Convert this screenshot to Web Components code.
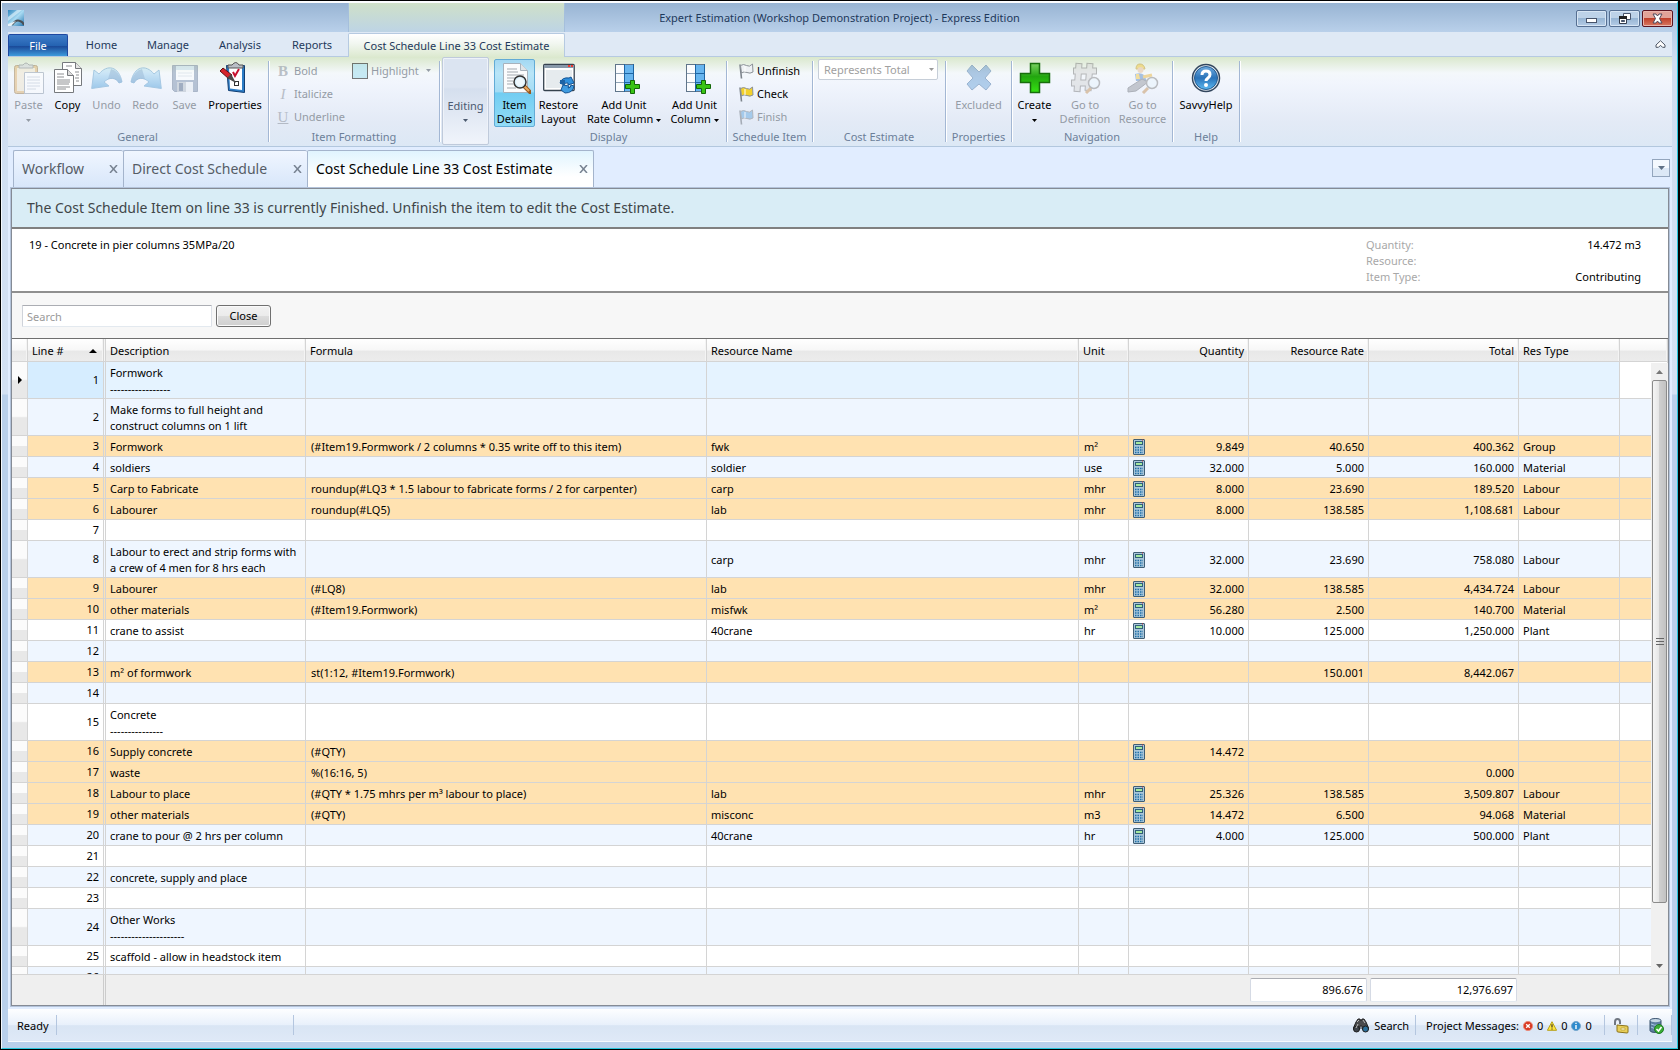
<!DOCTYPE html>
<html lang="en">
<head>
<meta charset="utf-8">
<title>Expert Estimation</title>
<style>
    html, body {
        margin: 0;
        height: 100%;
    }

    body {
        font-family: "Noto Sans", "Open Sans", sans-serif;
        font-size: 11px;
        line-height: 16px;
        color: #000;
        overflow: hidden;
    }
</style>
</head>
<body>

<app-window>
    <title-bar slot="title">Expert Estimation (Workshop Demonstration Project) - Express Edition</title-bar>

    <ribbon-tabs slot="ribbon"></ribbon-tabs>
    <ribbon-bar slot="ribbon">
        <ribbon-group label="General">
            <ribbon-button icon="paste" style="--w:39px" disabled arrow>Paste</ribbon-button>
            <ribbon-button icon="copy" style="--w:39px">Copy</ribbon-button>
            <ribbon-button icon="undo" style="--w:39px" disabled>Undo</ribbon-button>
            <ribbon-button icon="redo" style="--w:39px" disabled>Redo</ribbon-button>
            <ribbon-button icon="save" style="--w:39px" disabled>Save</ribbon-button>
            <ribbon-button icon="properties" style="--w:62px">Properties</ribbon-button>
        </ribbon-group>
        <ribbon-group label="Item Formatting">
            <ribbon-list style="--w:77px">
                <small-button icon="bold" disabled>Bold</small-button>
                <small-button icon="italic" disabled>Italicize</small-button>
                <small-button icon="underline" disabled>Underline</small-button>
            </ribbon-list>
            <ribbon-list style="--w:87px">
                <small-button icon="swatch" disabled arrow>Highlight</small-button>
            </ribbon-list>
        </ribbon-group>
        <ribbon-collapsed>Editing</ribbon-collapsed>
        <ribbon-group label="Display">
            <ribbon-button icon="details" style="--w:41px" active>Item<br>Details</ribbon-button>
            <ribbon-button icon="layout" style="--w:47px">Restore<br>Layout</ribbon-button>
            <ribbon-button icon="column" style="--w:84px" inline-arrow>Add Unit<br>Rate Column</ribbon-button>
            <ribbon-button icon="column" style="--w:57px" inline-arrow>Add Unit<br>Column</ribbon-button>
        </ribbon-group>
        <ribbon-group label="Schedule Item">
            <ribbon-list style="--w:79px; --indent:8px">
                <small-button icon="flag-white">Unfinish</small-button>
                <small-button icon="flag-yellow">Check</small-button>
                <small-button icon="flag-blue" disabled>Finish</small-button>
            </ribbon-list>
        </ribbon-group>
        <ribbon-group label="Cost Estimate">
            <ribbon-combo>Represents Total</ribbon-combo>
        </ribbon-group>
        <ribbon-group label="Properties">
            <ribbon-button icon="cross" style="--w:59px" disabled>Excluded</ribbon-button>
        </ribbon-group>
        <ribbon-group label="Navigation">
            <ribbon-button icon="plus" style="--w:39px" arrow>Create</ribbon-button>
            <ribbon-button icon="hash" style="--w:62px" disabled>Go to<br>Definition</ribbon-button>
            <ribbon-button icon="resource" style="--w:53px" disabled>Go to<br>Resource</ribbon-button>
        </ribbon-group>
        <ribbon-group label="Help">
            <ribbon-button icon="help" style="--w:60px">SavvyHelp</ribbon-button>
        </ribbon-group>
    </ribbon-bar>

    <doc-tabs>
        <doc-tab style="--w:110px">Workflow</doc-tab>
        <doc-tab style="--w:184px">Direct Cost Schedule</doc-tab>
        <doc-tab style="--w:287px" active>Cost Schedule Line 33 Cost Estimate</doc-tab>
    </doc-tabs>

    <content-frame>
        <message-banner>The Cost Schedule Item on line 33 is currently Finished. Unfinish the item to edit the Cost Estimate.</message-banner>
        <item-summary>
            19 - Concrete in pier columns 35MPa/20
            <span slot="quantity">14.472 m3</span>
            <span slot="type">Contributing</span>
        </item-summary>
        <search-panel></search-panel>
        <estimate-grid></estimate-grid>
    </content-frame>

    <status-bar slot="status"></status-bar>
</app-window>

<script>
const ICONS = {
    app: `<svg viewBox="0 0 16 16"><defs><linearGradient id="g" x2="1" y2="1"><stop offset="0" stop-color="#2f86bd"/><stop offset=".5" stop-color="#a8daf2"/><stop offset="1" stop-color="#2a78b0"/></linearGradient></defs>
        <rect width="16" height="16" fill="url(#g)"/><path d="M0 11 14 0H9L0 7z" fill="#e6f6fd" opacity=".6"/><path d="M4 15q4-6 8-4 3 1 4 4" fill="none" stroke="#4b4f55" stroke-width="2"/><path d="M0 16v-2l8-3-5 5z" fill="#e8f2f8"/></svg>`,
    paste: `<svg viewBox="0 0 32 32"><rect x="1.500" y="3.500" width="23" height="28" rx="2" fill="#dba85a" stroke="#8d6a35"/><rect x="4" y="6" width="18" height="23" fill="#eee3c8"/>
        <path d="M6 6V3h4q3-4 6 0h4v3z" fill="#c9cdd2" stroke="#6f757c"/><path d="M11.500 10.500h19v21h-19z" fill="#fff" stroke="#7f8ea0"/><path d="M14 15h13M14 18h13M14 21h13M14 24h13M14 27h9" stroke="#b2bccb"/></svg>`,
    copy: `<svg viewBox="0 0 32 32"><g fill="#fff" stroke="#76797d"><path d="M10.500 .5h13l6 6v17h-19z"/><path d="M23.500 .5v6h6" fill="#e4e4e4"/><path d="M2.500 7.500h13l6 6v17h-19z"/><path d="M15.500 7.500v6h6" fill="#dedede"/></g>
        <path d="M23 10h4M24 13h3M23 16h4M24 19h3M14 4h6M5 12h7M5 15h7M5 18h13M5 20h13M5 22h12M5 25h13M5 27h9" stroke="#8d8f92"/></svg>`,
    undo: `<svg viewBox="0 0 32 32"><defs><linearGradient id="g" y2="1" x2="0"><stop offset="0" stop-color="#b9e3fa"/><stop offset="1" stop-color="#3b94d4"/></linearGradient></defs>
        <path d="M.7 26.500 3 8l5 4c8-10 20-8 23 8l-3 1c-3-6-10-6-15-1l5 4z" fill="url(#g)" stroke="#4b92c6"/><path d="M20 7q8 2 11 13l-3 1q-4-6-11-4z" fill="#2d6ba8" opacity=".5"/></svg>`,
    redo: `<svg viewBox="0 0 32 32"><defs><linearGradient id="g" y2="1" x2="0"><stop offset="0" stop-color="#b9e3fa"/><stop offset="1" stop-color="#3b94d4"/></linearGradient></defs>
        <g transform="matrix(-1 0 0 1 32 0)"><path d="M.7 26.500 3 8l5 4c8-10 20-8 23 8l-3 1c-3-6-10-6-15-1l5 4z" fill="url(#g)" stroke="#4b92c6"/><path d="M20 7q8 2 11 13l-3 1q-4-6-11-4z" fill="#2d6ba8" opacity=".5"/></g></svg>`,
    save: `<svg viewBox="0 0 32 32"><path d="M3.500 3.500h25v26h-23l-2-2z" fill="#6d84a3" stroke="#5a6e8c"/><rect x="7" y="4" width="18" height="14" fill="#fff"/><path d="M7 4h18v4H7z" fill="#bcd8ea"/><path d="M9 11h14M9 14h14" stroke="#c9d4dd"/>
        <rect x="8" y="20" width="16" height="10" fill="#aab4bf"/><rect x="10" y="21" width="4" height="8" fill="#41597b"/><path d="M17 20h7v10h-7z" fill="#e8ecf0"/></svg>`,
    properties: `<svg viewBox="0 0 32 32"><path d="M7.500 3.500h18v27l-16-2z" fill="#2d7dc6" stroke="#123f74"/><path d="M10 6h13v22l-12-1.500z" fill="#fff"/><path d="M9 6V3h4q4-5 7 0h4v3z" fill="#b9bec6" stroke="#555"/>
        <path d="M14 10l2 4 4-7" fill="none" stroke="#c8102e" stroke-width="2"/><rect x="15.500" y="19.500" width="4" height="4" fill="#fff" stroke="#333"/><path d="M1 9l3-3 9 7-3 4z" fill="#d6242b" stroke="#5c1014"/><path d="M8 16l4-4 5 9z" fill="#4a4a4a"/></svg>`,
    bold: `<b>B</b>`, italic: `<i>I</i>`, underline: `<u>U</u>`,
    swatch: `<svg viewBox="0 0 16 16"><rect x=".5" y=".5" width="15" height="15" fill="#a9e0f0" stroke="#222"/></svg>`,
    details: `<svg viewBox="0 0 32 32"><path d="M4.500 1.500h17l7 7v22h-24z" fill="#fbfcfd" stroke="#a7b2bc"/><path d="M21.500 1.500v7h7" fill="#dfe4e8" stroke="#a7b2bc"/><path d="M8 7h10M8 10h11M8 13h17M8 16h9M8 19h6M8 22h6M8 26h9" stroke="#a3a9af" stroke-width="1"/>
        <path d="M25 24l6 6" stroke="#9a5a1e" stroke-width="4" stroke-linecap="round"/><path d="M25 24l5 5" stroke="#e8a860" stroke-width="2"/><circle cx="21" cy="20" r="6" fill="#d7eefb" stroke="#333" stroke-width="1.500"/><circle cx="21" cy="20" r="4" fill="#fff" opacity=".6"/></svg>`,
    layout: `<svg viewBox="0 0 32 32"><rect x=".7" y="2.500" width="30.500" height="26" rx="1" fill="#fff" stroke="#36424f" stroke-width="1.300"/><rect x="1" y="3" width="30" height="3" fill="#8798a9"/><path d="M25 4h2M28 4h2" stroke="#ef3a2f" stroke-width="2"/><path d="M3 8h26v18H3z" fill="#e6ebee"/>
        <path d="M17 21q2-6 9-5l2-1 3 6-6 2v-2q-3-1-4 2z" fill="#2f8fdc" stroke="#135394"/><path d="M31 24q-1 7-9 7l-4-3 2-5 6 1-1 2q3 0 3-3z" fill="#3f9be0" stroke="#135394"/><path d="M17 18h5v4h-5z" fill="#1d62a4"/></svg>`,
    column: `<svg viewBox="0 0 32 32"><g transform="translate(3 0)"><rect x="4.500" y="2.500" width="18" height="27" fill="#fbfcfe" stroke="#60758a"/><path d="M5 11.500h17M5 20.500h17" stroke="#8fa2b5"/><rect x="14" y="3" width="8" height="26" fill="#67b5ef"/><path d="M13.500 2v28M14 11.500h9M14 20.500h9" stroke="#1e65a3"/><path d="M22.500 2v28" stroke="#1e65a3"/>
        <path d="M19.500 18.500h4v4h5v4h-5v5h-4v-5h-5v-4h5z" fill="#39c414" stroke="#136708"/></g></svg>`,
    cross: `<svg viewBox="0 0 32 32"><defs><linearGradient id="g" y2="1" x2="0"><stop offset="0" stop-color="#4f83bd"/><stop offset="1" stop-color="#67a5dc"/></linearGradient></defs><path d="M4 9l5-6 7 7 7-7 5 6-6 7 6 6-5 6-7-6-7 6-5-6 6-6z" fill="url(#g)" stroke="#31649a"/></svg>`,
    plus: `<svg viewBox="0 0 32 32"><defs><linearGradient id="g" y2="1" x2="0"><stop offset="0" stop-color="#78d060"/><stop offset=".45" stop-color="#22a60f"/><stop offset="1" stop-color="#35e312"/></linearGradient></defs><path d="M11.500 1.500h9v10h10v9h-10v10h-9v-10h-10v-9h10z" fill="url(#g)" stroke="#176e0c" stroke-width="1.500"/></svg>`,
    hash: `<svg viewBox="0 0 32 32"><g fill="none" stroke="#6a6a6a" stroke-width="7"><path d="M10 1 8 30M21 1l-2 28M4 9h24M2 21h23"/></g><g fill="none" stroke="#d2d2d2" stroke-width="5"><path d="M10 2 8 29M21 2l-2 26M5 9h22M3 21h21"/></g><path d="M22 26l-5 5" stroke="#c18a4a" stroke-width="3"/><circle cx="25" cy="21" r="5.500" fill="#e8f4fc" stroke="#777" stroke-width="1.500"/></svg>`,
    resource: `<svg viewBox="0 0 32 32"><path d="M9 7q0-5 4-5t5 5z" fill="#f3c321" stroke="#b98b0d"/><circle cx="13.500" cy="8" r="3" fill="#e8b88f"/><path d="M8 12q6-2 9 1l3 6H9z" fill="#4b7fc0"/><path d="M9 12h3l1 5h-4z" fill="#f0c030"/><path d="M1 26l14-9 6 3-12 9-8 1z" fill="#8c9098" stroke="#5c6068"/><path d="M16 15l9-2" stroke="#e8b02c" stroke-width="3"/><path d="M21 26l-5 5" stroke="#c18a4a" stroke-width="3"/><circle cx="25" cy="21" r="5.500" fill="#e8f4fc" stroke="#777" stroke-width="1.500"/></svg>`,
    help: `<svg viewBox="0 0 32 32"><defs><linearGradient id="g" y2="1" x2="0"><stop offset="0" stop-color="#6fabdf"/><stop offset=".5" stop-color="#2a73b9"/><stop offset="1" stop-color="#5cb9f2"/></linearGradient></defs><circle cx="16" cy="16" r="13.500" fill="#e7edf3" stroke="#33475e" stroke-width="1.500"/><circle cx="16" cy="16" r="11.500" fill="url(#g)" stroke="#255b8f"/>
        <path d="M12 13q0-4 4-4t4 3.500q0 2-2 3.500t-2 3" fill="none" stroke="#fff" stroke-width="3"/><circle cx="16" cy="23" r="2" fill="#fff"/></svg>`,
    calc: `<svg viewBox="0 0 12 16"><rect x=".5" y=".5" width="11" height="15" rx=".5" fill="#a9c6da" stroke="#3f5e75"/><rect x="2" y="2" width="8" height="4" fill="#2f6079"/><rect x="3" y="3" width="6" height="2" fill="#a6e8a0"/><path d="M9 1h1" stroke="#c33"/>
        <path d="M2 8.500h8M2 11h8M2 13.500h8" stroke="#1f6fa8" stroke-width="1.500" stroke-dasharray="1.500 1"/></svg>`,
    binoculars: `<svg viewBox="0 0 16 16"><path d="M3 4l2-3h2l1 2 1-2h2l2 3 3 7H9V8H7v3H0z" fill="#4a4b4d" stroke="#242526"/><circle cx="3.500" cy="11" r="3" fill="#3d434a" stroke="#1c1c1c"/><circle cx="12.500" cy="11" r="3" fill="#2c6f9a" stroke="#1c1c1c"/><path d="M4 4l2-2M10 2l2 3M3 10l2-4" stroke="#bbb"/></svg>`,
    error: `<svg viewBox="0 0 10 10"><circle cx="5" cy="5" r="4.600" fill="#d93a24" stroke="#e88a7a"/><path d="M3.200 3.200l3.600 3.600M6.800 3.200 3.200 6.800" stroke="#fff" stroke-width="1.400"/></svg>`,
    warning: `<svg viewBox="0 0 10 10"><path d="M5 .7 9.600 9.300H.4z" fill="#ffe640" stroke="#b7a118"/><path d="M5 3.300v3.200M5 7.400v1.100" stroke="#222" stroke-width="1.100"/></svg>`,
    info: `<svg viewBox="0 0 10 10"><circle cx="5" cy="5" r="4.500" fill="#2e8bcd" stroke="#78a7cc"/><path d="M5 1.800v1.300M5 4v4" stroke="#fff" stroke-width="1.400"/></svg>`,
    lock: `<svg viewBox="0 0 16 16"><path d="M2 7V4q0-3 2.500-3T7 4v2" fill="none" stroke="#6f7680" stroke-width="2"/><path d="M4 7l10 1q1 0 1 1v5q0 1-1 1l-9-1q-1 0-1-1z" fill="#e9cf58" stroke="#8c7418"/><path d="M8 10h4v2H8z" fill="#fff6c0" stroke="#b39c3e" stroke-width=".7"/></svg>`,
    database: `<svg viewBox="0 0 16 16"><path d="M2 2.500q0-2 5.500-2t5.500 2v10q0 2-5.500 2t-5.500-2z" fill="#5d7fa1" stroke="#36506b"/><ellipse cx="7.500" cy="2.600" rx="5" ry="1.600" fill="#c7d8e6"/><path d="M3 6q4 2 7 1M3 9q3 2 5 1" stroke="#a5c8e6" fill="none"/><circle cx="11" cy="11" r="4.500" fill="#3aad36" stroke="#1c7a22"/><path d="M8.500 11l2 2 3-4" stroke="#fff" stroke-width="1.600" fill="none"/></svg>`
};

['white', 'yellow', 'blue'].forEach((tone) => {
    const fill = { white: '#eef1f4', yellow: '#f3d12c', blue: '#79b4e4' }[tone];
    ICONS['flag-' + tone] = `<svg viewBox="0 0 16 16"><path d="M2 1.500l1.500 14" stroke="#7d848c" stroke-width="1.600"/><path d="M2.500 2.500q3-2 6 0t6-1.500l.5 8q-3 2-6 .5t-5.500 .5z" fill="${fill}" stroke="#8c9298"/><path d="M7 3v6" stroke="#fff" opacity=".5" stroke-width="2"/></svg>`;
});

// shadow root from a markup string, shared by every element below
class BaseElement extends HTMLElement {
    constructor() {
        super();
        this.attachShadow({ mode: 'open' }).innerHTML = this.render();
    }

    render() {
        return '<slot></slot>';
    }
}

customElements.define('app-icon', class extends BaseElement {
    render() {
        return `
            <style>
                :host {
                    display: inline-block;
                    flex: none;
                    width: var(--icon-width, var(--icon-size, 16px));
                    height: var(--icon-size, 16px);
                    font: 15px/16px "Liberation Serif", serif;
                    text-align: center;
                    white-space: normal;
                }
                svg { display: block; width: 100%; height: 100%; }
            </style>
            ${ICONS[this.getAttribute('name')]}
        `;
    }
});

customElements.define('app-window', class extends BaseElement {
    render() {
        return `
            <style>
                :host {
                    display: flex;
                    flex-direction: column;
                    box-sizing: border-box;
                    height: 100vh;
                    border: 1px solid #000;
                    border-right-width: 2px;
                    background: #b9d1ec;
                }
                .glow {
                    display: flex;
                    flex-direction: column;
                    flex: 1;
                    min-height: 0;
                    border: solid #28c6dc;
                    border-width: 0 1px 1px 0;
                    border-left: 1px solid #f4f8fc;
                    border-top: 2px solid #fcfdff;
                    background: linear-gradient(#98b4d3, #b9d0ea 29px, #cfdef1 60px, #d3e1f3 391px, #b9d0eb 392px);
                }
                .body {
                    display: flex;
                    flex-direction: column;
                    flex: 1;
                    min-height: 0;
                    margin: 0 5px 7px 6px;
                    background: #e1edff;
                }
                main {
                    display: flex;
                    flex-direction: column;
                    flex: 1;
                    min-height: 0;
                    padding: 3px 2px 2px;
                }
            </style>
            <div class="glow">
                <slot name="title"></slot>
                <div class="body">
                    <slot name="ribbon"></slot>
                    <main><slot></slot></main>
                    <slot name="status"></slot>
                </div>
            </div>
        `;
    }
});

customElements.define('title-bar', class extends BaseElement {
    render() {
        return `
            <style>
                :host {
                    display: grid;
                    grid-template-columns: 1fr;
                    height: 29px;
                    flex: none;
                    color: #1e395b;
                }
                :host > * { grid-area: 1 / 1; }
                .context {
                    width: 215px;
                    margin-left: 346px;
                    border: solid #a5bfdc;
                    border-width: 0 1px;
                    background: linear-gradient(#cfe0c8, #bad2ea);
                }
                .left { padding: 7px 6px; }
                h1 {
                    margin: 0;
                    font: inherit;
                    text-align: center;
                    line-height: 29px;
                }
                .buttons {
                    display: flex;
                    justify-content: flex-end;
                    align-items: flex-start;
                    gap: 2px;
                    padding: 7px 4px 0 0;
                }
                button {
                    display: grid;
                    place-items: center;
                    width: 31px;
                    height: 17px;
                    padding: 0;
                    border: 1px solid #566f92;
                    border-radius: 2px;
                    box-shadow: inset 0 0 0 1px #d7e5f4;
                    background: linear-gradient(#bdd2e8 45%, #97b5d4 50%, #b5cce6);
                }
                .close {
                    border-color: #5b1420;
                    box-shadow: inset 0 0 0 1px #e9b5ac;
                    background: linear-gradient(#e2a398 45%, #c0402b 50%, #d87962);
                }
                svg { width: 15px; height: 11px; }
            </style>
            <div class="context"></div>
            <div class="left"><app-icon name="app"></app-icon></div>
            <h1><slot></slot></h1>
            <div class="buttons">
                <button aria-label="Minimize"><svg viewBox="0 0 15 11"><rect x="2.500" y="5.500" width="10" height="4" fill="#fff" stroke="#47536a"/></svg></button>
                <button aria-label="Restore"><svg viewBox="0 0 15 11"><path d="M6.500.5h7v6h-7z" fill="#fff" stroke="#47536a"/><path d="M2.500 3.500h7v7h-7z" fill="#fff" stroke="#333c4d"/><path d="M2 4.500h8" stroke="#222" stroke-width="3"/><path d="M4.500 7.500h3v1h-3z" stroke="#47536a"/></svg></button>
                <button class="close" aria-label="Close"><svg viewBox="0 0 15 11"><path d="M3 1h3l1.500 2L9 1h3L9.500 5.500 12 10H9L7.500 8 6 10H3l2.500-4.500z" fill="#fff" stroke="#50485a"/></svg></button>
            </div>
        `;
    }
});

customElements.define('ribbon-tabs', class extends BaseElement {
    render() {
        return `
            <style>
                :host {
                    display: flex;
                    align-items: flex-end;
                    flex: none;
                    height: 24px;
                    background: #dfe9f5;
                    border-bottom: 1px solid #b6cae1;
                }
                button {
                    height: 23px;
                    padding: 0;
                    border: 0;
                    background: none;
                    font: inherit;
                    color: #1e395b;
                }
                .file {
                    width: 60px;
                    height: 22px;
                    margin-right: 3px;
                    border: 1px solid #1f48a0;
                    border-bottom: 0;
                    border-radius: 2px 2px 0 0;
                    background: linear-gradient(#3f7dc9, #2563b2 50%, #1b4b9a 55%, #3d9bdc);
                    color: #fff;
                }
                .home { width: 61px; }
                .wide { width: 72px; }
                .context {
                    width: 217px;
                    height: 24px;
                    margin-bottom: -1px;
                    border: 1px solid #b6cae1;
                    border-bottom: 0;
                    border-radius: 2px 2px 0 0;
                    background: linear-gradient(#fff, #f2f7f1 40%, #dce9cf);
                }
                .collapse {
                    display: grid;
                    place-items: center;
                    width: 24px;
                    margin-left: auto;
                }
            </style>
            <button class="file">File</button>
            <button class="home">Home</button>
            <button class="wide">Manage</button>
            <button class="wide">Analysis</button>
            <button class="wide">Reports</button>
            <button class="context">Cost Schedule Line 33 Cost Estimate</button>
            <button class="collapse" aria-label="Minimize the ribbon"><svg width="11" height="9" viewBox="0 0 11 9"><path d="M5.500.7 1 5v2.300h2.500l2-2 2 2H10V5z" fill="#fff" stroke="#4d5665"/></svg></button>
        `;
    }
});

customElements.define('ribbon-bar', class extends BaseElement {
    render() {
        return `
            <style>
                :host {
                    display: flex;
                    flex: none;
                    height: 89px;
                    border-bottom: 1px solid #b2c7de;
                    background: linear-gradient(#dae8cd, #f4f8fb 16px, #f1f5fd 26px, #e3eaf6 65px, #dce8f5);
                }
            </style>
            <slot></slot>
        `;
    }
});

customElements.define('ribbon-group', class extends BaseElement {
    render() {
        return `
            <style>
                :host {
                    display: flex;
                    flex-direction: column;
                    position: relative;
                    padding: 2px 4px 0 3px;
                    border-right: 0;
                }
                :host(:first-child) { padding-left: 1px; padding-right: 3px; }
                .items { display: flex; height: 70px; }
                .label {
                    text-align: center;
                    color: #6c7f99;
                    white-space: nowrap;
                }
                /* etched divider, stops short of the ribbon edges */
                :host::after {
                    content: "";
                    position: absolute;
                    right: 0;
                    top: 4px;
                    bottom: 4px;
                    width: 1px;
                    background: #a3b7d4;
                    box-shadow: 1px 0 #fff;
                }
            </style>
            <div class="items"><slot></slot></div>
            <div class="label">${this.getAttribute('label')}</div>
        `;
    }
});

const ARROW = '<svg class="arrow" width="5" height="3" viewBox="0 0 5 3"><path d="M0 0h5L2.500 3z" fill="currentColor"/></svg>';

customElements.define('ribbon-button', class extends BaseElement {
    render() {
        const off = this.hasAttribute('disabled') ? 'disabled' : '';
        const arrow = this.hasAttribute('arrow') ? `<br>${ARROW}` : '';
        const inlineArrow = this.hasAttribute('inline-arrow') ? ` ${ARROW}` : '';
        return `
            <style>
                :host { display: block; width: var(--w); --icon-size: 32px; }
                button {
                    display: flex;
                    flex-direction: column;
                    align-items: center;
                    gap: 4px;
                    width: 100%;
                    height: 68px;
                    padding: 2px 0 0;
                    border: 1px solid transparent;
                    border-radius: 2px;
                    background: none;
                    font: inherit;
                    line-height: 14px;
                    color: #000;
                    white-space: nowrap;
                }
                button:disabled { color: #949ba5; }
                button:disabled app-icon { opacity: 0.45; }
                :host([active]) button {
                    border-color: #62abd6;
                    background: linear-gradient(#a3d8f2, #b9e5f8 20%, #a4dcf5 48%, #72cdf2 50%, #93dcf7);
                }
                .arrow { vertical-align: middle; }
            </style>
            <button ${off}>
                <app-icon name="${this.getAttribute('icon')}"></app-icon>
                <span><slot></slot>${inlineArrow}${arrow}</span>
            </button>
        `;
    }
});

customElements.define('ribbon-list', class extends BaseElement {
    render() {
        return `
            <style>
                :host { display: flex; flex-direction: column; width: var(--w); }
            </style>
            <slot></slot>
        `;
    }
});

customElements.define('small-button', class extends BaseElement {
    render() {
        const off = this.hasAttribute('disabled') ? 'disabled' : '';
        return `
            <style>
                :host { display: block; }
                button {
                    display: flex;
                    align-items: center;
                    gap: 3px;
                    height: 23px;
                    padding: 0 0 0 var(--indent, 3px);
                    border: 0;
                    background: none;
                    font: inherit;
                    color: #000;
                    white-space: nowrap;
                }
                button:disabled { color: #949ba5; }
                button:disabled app-icon { opacity: 0.6; }
                .arrow { margin-left: 4px; }
            </style>
            <button ${off}>
                <app-icon name="${this.getAttribute('icon')}"></app-icon>
                <slot></slot>
                ${this.hasAttribute('arrow') ? ARROW : ''}
            </button>
        `;
    }
});

customElements.define('ribbon-collapsed', class extends BaseElement {
    render() {
        return `
            <style>
                :host { display: block; padding: 0 2px; }
                button {
                    width: 47px;
                    height: 88px;
                    padding: 22px 0 0;
                    border: 1px solid #bfcadb;
                    border-radius: 2px;
                    box-shadow: inset 0 0 0 1px #eef2f9;
                    background: linear-gradient(#dbe4f1 34%, #d5dfee 36%, #f0f4fb);
                    font: inherit;
                    line-height: 12px;
                    color: #4c5a70;
                }
            </style>
            <button><slot></slot><br>${ARROW}</button>
        `;
    }
});

customElements.define('ribbon-combo', class extends BaseElement {
    render() {
        return `
            <style>
                :host { display: grid; width: 124px; height: 23px; padding-left: 2px; }
                select, svg { grid-area: 1 / 1; }
                select {
                    appearance: none;
                    box-sizing: border-box;
                    width: 120px;
                    height: 21px;
                    padding: 0 5px;
                    border: 1px solid #c6ced8;
                    border-radius: 2px;
                    background: #fff;
                    font: inherit;
                    color: #a0a0a0;
                    opacity: 1;
                }
                svg { justify-self: end; margin: 9px 8px 0 0; color: #9a9a9a; }
            </style>
            <select disabled aria-label="Cost Estimate"><option>${this.textContent}</option></select>
            ${ARROW}
        `;
    }
});

customElements.define('doc-tabs', class extends BaseElement {
    render() {
        return `
            <style>
                :host {
                    display: flex;
                    align-items: center;
                    flex: none;
                    padding: 0 0 0 3px;
                    height: 38px;
                }
                button {
                    display: grid;
                    place-items: center;
                    width: 18px;
                    height: 18px;
                    margin: 0 0 3px auto;
                    padding: 0;
                    border: 1px solid #93a5bd;
                    background: linear-gradient(#f4f9ff 50%, #dce8f6 50%);
                    color: #5f7186;
                }
            </style>
            <slot></slot>
            <button aria-label="Open documents"><svg width="7" height="4" viewBox="0 0 7 4"><path d="M0 0h7L3.500 4z" fill="currentColor"/></svg></button>
        `;
    }
});

customElements.define('doc-tab', class extends BaseElement {
    render() {
        return `
            <style>
                :host {
                    display: flex;
                    align-items: center;
                    justify-content: space-between;
                    box-sizing: border-box;
                    width: var(--w);
                    height: 38px;
                    padding: 0 3px 2px 8px;
                    border: 1px solid #a4b4cc;
                    border-bottom: 0;
                    border-right-width: 0;
                    border-radius: 2px 2px 0 0;
                    background: linear-gradient(#f0f6ff, #d7e6fa);
                    color: #555c66;
                    font-size: 14px;
                    white-space: nowrap;
                }
                :host([active]) {
                    border-right-width: 1px;
                    background: linear-gradient(#e0f4fe, #fff 70%);
                    color: #000;
                }
                button {
                    display: grid;
                    place-items: center;
                    width: 14px;
                    height: 14px;
                    padding: 0;
                    border: 0;
                    background: none;
                }
            </style>
            <slot></slot>
            <button aria-label="Close tab"><svg width="9" height="8" viewBox="0 0 9 8"><path d="M1 0l7 8M8 0 1 8" stroke="#778291" stroke-width="1.500"/></svg></button>
        `;
    }
});

customElements.define('content-frame', class extends BaseElement {
    render() {
        return `
            <style>
                :host {
                    display: flex;
                    flex-direction: column;
                    flex: 1;
                    min-height: 0;
                    border: 1px solid #858b95;
                    box-shadow: 0 0 0 1px #b3c3da;
                    margin: 0 1px 1px;
                    background: #f7f7f7;
                }
            </style>
            <slot></slot>
        `;
    }
});

customElements.define('message-banner', class extends BaseElement {
    render() {
        return `
            <style>
                :host {
                    display: block;
                    flex: none;
                    padding: 7px 15px 8px;
                    border-bottom: 2px solid #808080;
                    background: #d9edf6;
                    color: #404548;
                    font-size: 14px;
                    line-height: 23px;
                }
            </style>
            <slot></slot>
        `;
    }
});

customElements.define('item-summary', class extends BaseElement {
    render() {
        return `
            <style>
                :host {
                    display: flex;
                    justify-content: space-between;
                    flex: none;
                    padding: 8px 27px 6px 17px;
                    border-bottom: 2px solid #8f8f8f;
                    background: #fff;
                }
                dl {
                    display: grid;
                    grid-template-columns: auto auto;
                    grid-auto-rows: 16px;
                    justify-content: space-between;
                    width: 275px;
                    margin: 0;
                }
                dt { color: #a8a8a8; }
                dd { margin: 0; text-align: right; }
            </style>
            <div><slot></slot></div>
            <dl>
                <dt>Quantity:</dt><dd><slot name="quantity"></slot></dd>
                <dt>Resource:</dt><dd></dd>
                <dt>Item Type:</dt><dd><slot name="type"></slot></dd>
            </dl>
        `;
    }
});

customElements.define('search-panel', class extends BaseElement {
    render() {
        return `
            <style>
                :host {
                    display: flex;
                    gap: 4px;
                    flex: none;
                    padding: 12px 10px 11px;
                    border-bottom: 1px solid #6f6f6f;
                }
                input, button {
                    box-sizing: border-box;
                    height: 22px;
                    font: inherit;
                }
                input {
                    width: 190px;
                    padding: 0 4px;
                    border: 1px solid #abadb3;
                    border-color: #abadb3 #dde1e8 #e3e9ef #cfd3da;
                    border-radius: 1px;
                    background: #fff;
                }
                input::placeholder { color: #9a9a9a; }
                button {
                    width: 55px;
                    padding: 0;
                    border: 1px solid #707070;
                    border-radius: 3px;
                    box-shadow: inset 0 0 0 1px #fafafa;
                    background: linear-gradient(#f2f2f2, #ebebeb 50%, #ddd 50%, #cfcfcf);
                }
            </style>
            <input type="search" placeholder="Search" aria-label="Search">
            <button>Close</button>
        `;
    }
});

const COLUMNS = [16, 76, 2, 200, 401, 372, 50, 120, 120, 150, 101];

// line, description, formula, resource, unit, quantity, rate, total, type
const ROWS = [
    [1, 'Formwork\n-----------------'],
    [2, 'Make forms to full height and\nconstruct columns on 1 lift'],
    [3, 'Formwork', '(#Item19.Formwork / 2 columns * 0.35 write off to this item)', 'fwk', 'm²', '9.849', '40.650', '400.362', 'Group'],
    [4, 'soldiers', '', 'soldier', 'use', '32.000', '5.000', '160.000', 'Material'],
    [5, 'Carp to Fabricate', 'roundup(#LQ3 * 1.5 labour to fabricate forms / 2 for carpenter)', 'carp', 'mhr', '8.000', '23.690', '189.520', 'Labour'],
    [6, 'Labourer', 'roundup(#LQ5)', 'lab', 'mhr', '8.000', '138.585', '1,108.681', 'Labour'],
    [7],
    [8, 'Labour to erect and strip forms with\na crew of 4 men for 8 hrs each', '', 'carp', 'mhr', '32.000', '23.690', '758.080', 'Labour'],
    [9, 'Labourer', '(#LQ8)', 'lab', 'mhr', '32.000', '138.585', '4,434.724', 'Labour'],
    [10, 'other materials', '(#Item19.Formwork)', 'misfwk', 'm²', '56.280', '2.500', '140.700', 'Material'],
    [11, 'crane to assist', '', '40crane', 'hr', '10.000', '125.000', '1,250.000', 'Plant'],
    [12],
    [13, 'm² of formwork', 'st(1:12, #Item19.Formwork)', '', '', '', '150.001', '8,442.067'],
    [14],
    [15, 'Concrete\n---------------'],
    [16, 'Supply concrete', '(#QTY)', '', '', '14.472'],
    [17, 'waste', '%(16:16, 5)', '', '', '', '', '0.000'],
    [18, 'Labour to place', '(#QTY * 1.75 mhrs per m³ labour to place)', 'lab', 'mhr', '25.326', '138.585', '3,509.807', 'Labour'],
    [19, 'other materials', '(#QTY)', 'misconc', 'm3', '14.472', '6.500', '94.068', 'Material'],
    [20, 'crane to pour @ 2 hrs per column', '', '40crane', 'hr', '4.000', '125.000', '500.000', 'Plant'],
    [21],
    [22, 'concrete, supply and place'],
    [23],
    [24, 'Other Works\n---------------------'],
    [25, 'scaffold - allow in headstock item'],
    [26]
];

function renderRow([line, description = '', formula = '', resource = '', unit = '', quantity = '', rate = '', total = '', type = '']) {
    const kind = line === 1 ? 'selected' : formula ? 'formula' : '';
    const marker = line === 1 ? '<svg width="4" height="8" viewBox="0 0 4 8"><path d="M0 0l4 4-4 4z"/></svg>' : '';
    const calc = quantity ? '<app-icon name="calc"></app-icon>' : '';
    return `
        <tr class="${kind}">
            <td class="marker">${marker}</td>
            <td class="num line">${line}</td>
            <td class="split"></td>
            <td>${description}</td>
            <td class="edit">${formula}</td>
            <td>${resource}</td>
            <td class="edit">${unit}</td>
            <td><div class="qty">${calc}<span>${quantity}</span></div></td>
            <td class="num">${rate}</td>
            <td class="num">${total}</td>
            <td>${type}</td>
            <td class="rest"></td>
        </tr>
    `;
}

customElements.define('estimate-grid', class extends BaseElement {
    render() {
        const cols = COLUMNS.map((w) => `<col style="width:${w}px">`).join('') + '<col>';
        return `
            <style>
                :host { display: flex; flex-direction: column; flex: 1; min-height: 0; }
                .view { position: relative; flex: 1; min-height: 0; overflow: hidden; background: #fff; }
                table {
                    table-layout: fixed;
                    width: 100%;
                    border-collapse: separate;
                    border-spacing: 0;
                }
                th, td {
                    padding: 3px 4px 1px;
                    border: solid #d4d4d4;
                    border-width: 0 1px 1px 0;
                    overflow: hidden;
                    white-space: pre;
                }
                th {
                    height: 18px;
                    background: linear-gradient(#fff, #f7f7f7 50%, #e8e8e8 55%, #ececec);
                    box-shadow: inset -1px 0 #f4f4f4;
                    font-weight: normal;
                    text-align: left;
                }
                th.line svg { float: right; margin: 6px 2px 0 0; }
                tbody tr:nth-child(even) td { background: #eff6ff; }
                tbody tr.formula td { background: #ffe2b1; }
                tbody tr.selected td { background: #e5f3ff; }
                tbody tr.selected td.line { background: #d6edff; }
                tbody tr.selected td.rest { background: #fff; }
                tbody tr td.marker, tbody tr.selected td.marker {
                    background: linear-gradient(#fbfbfb 48%, #e8e8e8 52%);
                    text-align: center;
                    padding: 0;
                }
                td.line { padding-top: 2px; padding-bottom: 2px; }
                td.edit { padding-left: 5px; }
                .num { text-align: right; }
                th.split, td.split { padding: 0; }
                .qty { display: flex; align-items: center; height: 16px; --icon-width: 12px; }
                .qty span { margin-left: auto; }
                .bar {
                    position: absolute;
                    top: 24px;
                    right: 0;
                    bottom: 0;
                    display: flex;
                    flex-direction: column;
                    align-items: center;
                    justify-content: space-between;
                    box-sizing: border-box;
                    width: 17px;
                    padding: 7px 0 6px;
                    background: #f0f0f0;
                }
                .thumb {
                    display: grid;
                    place-items: center;
                    box-sizing: border-box;
                    width: 15px;
                    flex: 0 1 523px;
                    margin: 6px 0 auto;
                    border: 1px solid #8b8b8b;
                    border-radius: 2px;
                    background: linear-gradient(90deg, #f5f5f5, #e6e6e6 45%, #cfcfcf 50%, #c2c2c2);
                }
                footer {
                    display: flex;
                    flex: none;
                    height: 31px;
                    box-sizing: border-box;
                    border-top: 1px solid #d4d4d4;
                    background: #efefef;
                }
                footer .pad { width: 91px; border-right: 1px solid #ccc; }
                footer .pad + .pad { width: 1px; }
                footer .blank { width: 1142px; }
                output {
                    box-sizing: border-box;
                    height: 24px;
                    margin: 3px 1px 0 2px;
                    padding: 3px;
                    border: 1px solid #c3c6d0;
                    border-color: #abadb3 #d5dae4 #e3e9ef;
                    border-radius: 2px;
                    background: #fff;
                    text-align: right;
                }
                output.rate { width: 117px; }
                output.total { width: 147px; }
            </style>
            <div class="view">
                <table>
                    <colgroup>${cols}</colgroup>
                    <thead>
                        <tr>
                            <th></th>
                            <th class="line">Line #<svg width="8" height="4" viewBox="0 0 8 4"><path d="M0 4l4-4 4 4z"/></svg></th>
                            <th class="split"></th>
                            <th>Description</th>
                            <th>Formula</th>
                            <th>Resource Name</th>
                            <th>Unit</th>
                            <th class="num">Quantity</th>
                            <th class="num">Resource Rate</th>
                            <th class="num">Total</th>
                            <th>Res Type</th>
                            <th></th>
                        </tr>
                    </thead>
                    <tbody>${ROWS.map(renderRow).join('')}</tbody>
                </table>
                <div class="bar">
                    <svg width="7" height="4" viewBox="0 0 7 4"><path d="M0 4l3.500-4L7 4z" fill="#777"/></svg>
                    <div class="thumb"><svg width="8" height="8" viewBox="0 0 8 8"><path d="M0 .5h8M0 3.500h8M0 6.500h8" stroke="#666"/></svg></div>
                    <svg width="7" height="4" viewBox="0 0 7 4"><path d="M0 0h7L3.500 4z" fill="#666"/></svg>
                </div>
            </div>
            <footer>
                <div class="pad"></div>
                <div class="pad"></div>
                <div class="blank"></div>
                <output class="rate">896.676</output>
                <output class="total">12,976.697</output>
            </footer>
        `;
    }
});

customElements.define('status-bar', class extends BaseElement {
    render() {
        return `
            <style>
                :host {
                    display: flex;
                    align-items: center;
                    flex: none;
                    height: 32px;
                    border-bottom: 1px solid #f6f9fd;
                    margin-bottom: -1px;
                    background: linear-gradient(#fdfeff, #e8f0fb 50%, #d9e5f4 52%, #dfe9f7);
                }
                .cell {
                    display: flex;
                    align-items: center;
                    gap: 4px;
                    box-sizing: border-box;
                    height: 20px;
                    padding-top: 2px;
                    border-right: 1px solid #b4c6df;
                    white-space: nowrap;
                }
                .ready { width: 49px; padding-left: 9px; }
                .empty { width: 237px; }
                .find { margin-left: auto; padding-right: 6px; }
                .messages { width: 189px; padding-left: 10px; --icon-size: 10px; }
                .lock { width: 33px; padding-left: 8px; }
                .data { width: 34px; padding-left: 10px; }
                button {
                    display: flex;
                    align-items: center;
                    gap: 5px;
                    padding: 0;
                    border: 0;
                    background: none;
                    font: inherit;
                }
            </style>
            <div class="cell ready">Ready</div>
            <div class="cell empty"></div>
            <div class="cell find"><button><app-icon name="binoculars"></app-icon>Search</button></div>
            <div class="cell messages">
                <span>Project Messages:</span>
                <app-icon name="error"></app-icon><span>0</span>
                <app-icon name="warning"></app-icon><span>0</span>
                <app-icon name="info"></app-icon><span>0</span>
            </div>
            <div class="cell lock"><button aria-label="Unlocked"><app-icon name="lock"></app-icon></button></div>
            <div class="cell data"><button aria-label="Database connected"><app-icon name="database"></app-icon></button></div>
        `;
    }
});
</script>
</body>
</html>
